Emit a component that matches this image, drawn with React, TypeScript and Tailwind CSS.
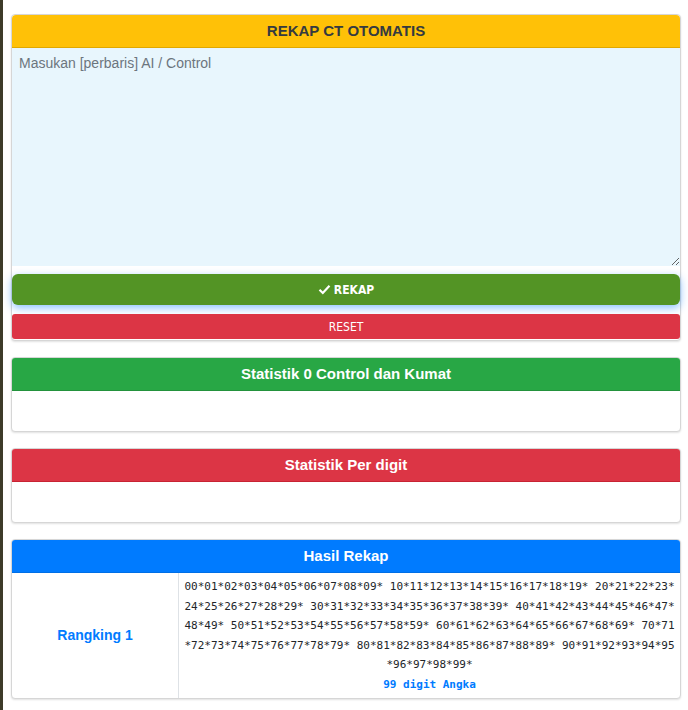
import React from 'react';

const numbers =
  '00*01*02*03*04*05*06*07*08*09* 10*11*12*13*14*15*16*17*18*19* 20*21*22*23*24*25*26*27*28*29* 30*31*32*33*34*35*36*37*38*39* 40*41*42*43*44*45*46*47*48*49* 50*51*52*53*54*55*56*57*58*59* 60*61*62*63*64*65*66*67*68*69* 70*71*72*73*74*75*76*77*78*79* 80*81*82*83*84*85*86*87*88*89* 90*91*92*93*94*95*96*97*98*99*';

const sans = { fontFamily: '"Liberation Sans", Arial, sans-serif' };
const narrow = { fontFamily: '"DejaVu Sans Condensed", "Liberation Sans Narrow", sans-serif', fontStretch: 'condensed' };

const Card: React.FC<{ title: string; head: string; children?: React.ReactNode }> = ({ title, head, children }) => (
  <div className="border border-[#d6d6d6] rounded-[4px] shadow-[0_1px_2px_rgba(0,0,0,0.12)] bg-white overflow-hidden">
    <div className={`h-[33px] flex items-center justify-center text-[15px] font-bold border-b ${head}`}>{title}</div>
    {children}
  </div>
);

export default function App() {
  return (
    <div className="flex min-h-[710px] bg-white" style={sans}>
      <div className="w-[3px] bg-[#3d3b29] shrink-0" />
      <div className="flex-1 pl-[8px] pr-[7px] pt-[14px] flex flex-col gap-[16px]">
        {/* input card */}
        <div className="border border-[#d6d6d6] rounded-[4px] shadow-[0_1px_2px_rgba(0,0,0,0.12)] bg-white">
          <div className="h-[33px] flex items-center justify-center text-[15px] font-bold text-[#343a40] bg-[#ffc107] border-b border-[#e0a800] rounded-t-[4px]">
            REKAP CT OTOMATIS
          </div>
          <textarea
            className="block w-full h-[218px] bg-[#e8f6fd] px-[7px] py-[5px] text-[14px] text-[#495057] placeholder-[#6c757d] outline-none resize-y"
            placeholder="Masukan [perbaris] AI / Control"
          />
          <div className="flex flex-col gap-[9px] pt-[8px] pb-[1px]">
            <button
              className="h-[31px] w-full rounded-[6px] bg-[#539425] text-white text-[12px] font-bold flex items-center justify-center gap-[3px] shadow-[0_3px_8px_rgba(0,123,255,0.45)]"
              style={narrow}
            >
              <svg width="13" height="11" viewBox="0 0 13 11">
                <path d="M1.5 5.8 L4.8 9 L11.5 1.8" fill="none" stroke="white" strokeWidth="2.2" />
              </svg>
              REKAP
            </button>
            <button
              className="h-[25px] w-full rounded-[3px] bg-[#dc3545] text-white text-[12px] flex items-center justify-center"
              style={narrow}
            >
              RESET
            </button>
          </div>
        </div>

        <Card title="Statistik 0 Control dan Kumat" head="bg-[#28a745] text-white border-[#23923d]">
          <div className="h-[40px]" />
        </Card>

        <Card title="Statistik Per digit" head="bg-[#dc3545] text-white border-[#c82333]">
          <div className="h-[40px]" />
        </Card>

        <Card title="Hasil Rekap" head="bg-[#007bff] text-white border-[#006fe6]">
          <div className="flex">
            <div className="w-[167px] shrink-0 border-r border-[#dee2e6] flex items-center justify-center text-[14px] font-bold text-[#007bff]">
              Rangking 1
            </div>
            <div
              className="flex-1 px-[4px] py-[4px] text-center text-[11px] leading-[19.5px] text-[#212529] break-all"
              style={{ fontFamily: '"DejaVu Sans Mono", monospace' }}
            >
              {numbers}
              <div className="font-bold text-[#007bff] break-normal">99 digit Angka</div>
            </div>
          </div>
        </Card>
      </div>
    </div>
  );
}
